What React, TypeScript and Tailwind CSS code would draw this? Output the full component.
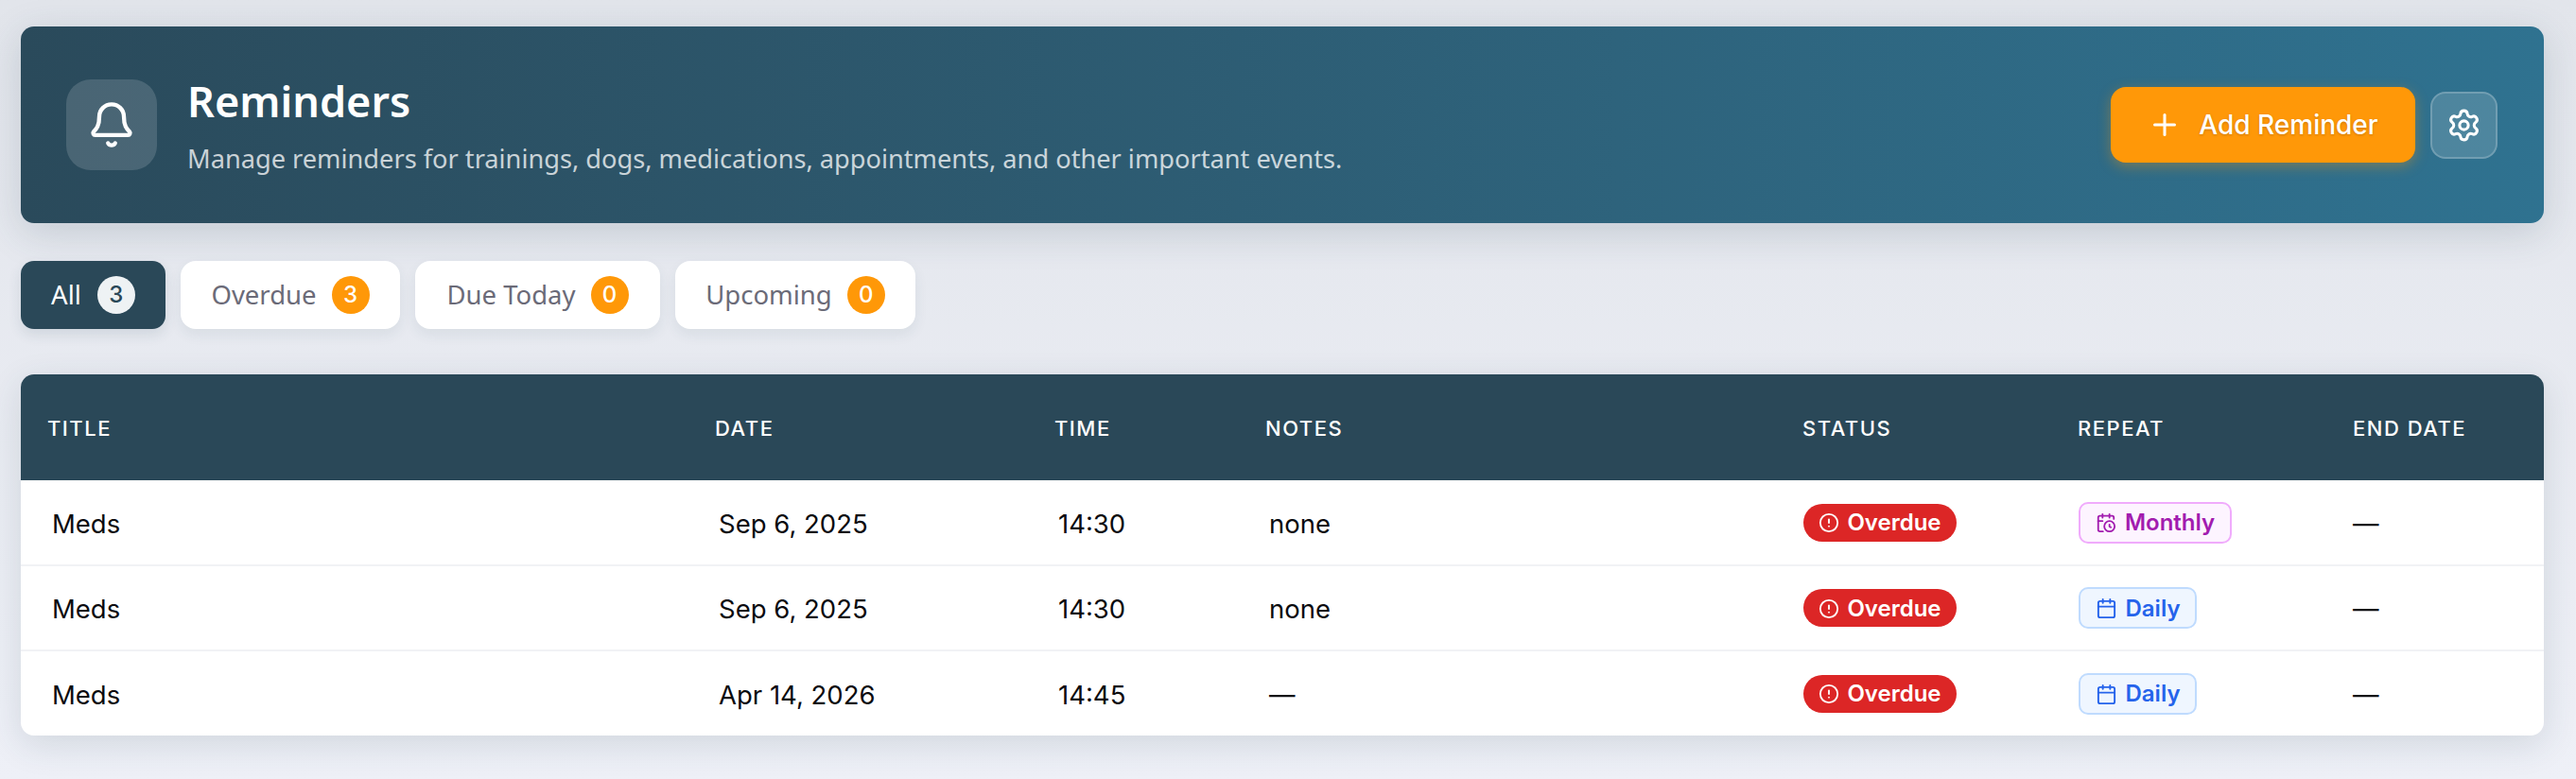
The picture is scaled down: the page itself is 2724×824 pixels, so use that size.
import React from 'react';
import { Bell, Plus, Settings, CircleAlert, Calendar, CalendarClock } from 'lucide-react';

const tabs = [
  { label: 'Overdue', count: 3, w: 'w-[232px]' },
  { label: 'Due Today', count: 0, w: 'w-[259px]' },
  { label: 'Upcoming', count: 0, w: 'w-[254px]' },
];

const rows = [
  { title: 'Meds', date: 'Sep 6, 2025', time: '14:30', notes: 'none', repeat: 'Monthly' },
  { title: 'Meds', date: 'Sep 6, 2025', time: '14:30', notes: 'none', repeat: 'Daily' },
  { title: 'Meds', date: 'Apr 14, 2026', time: '14:45', notes: '—', repeat: 'Daily' },
];

const headCell = 'pl-[28px] pt-[2px] text-left text-[22px] font-medium tracking-[1.5px] uppercase text-white';
const bodyCell = 'pl-[32px] pt-[4px] text-[27.5px] text-[#0b0b0f]';

const RepeatBadge: React.FC<{ kind: string }> = ({ kind }) => {
  if (kind === 'Monthly') {
    return (
      <span className="inline-flex h-[44px] w-[162px] items-center justify-center gap-[9px] rounded-[10px] border-2 border-[#f0abfc] bg-[#fdf4ff] pt-[1px] text-[24px] font-semibold text-[#a21caf]">
        <CalendarClock className="size-[22px]" strokeWidth={2} />
        Monthly
      </span>
    );
  }
  return (
    <span className="inline-flex h-[44px] w-[125px] items-center justify-center gap-[9px] rounded-[10px] border-2 border-[#bfdbfe] bg-[#eff6ff] pt-[1px] text-[24px] font-semibold text-[#2563eb]">
      <Calendar className="size-[23px]" strokeWidth={2} />
      Daily
    </span>
  );
};

export default function App() {
  return (
    <div className="min-h-screen bg-gradient-to-b from-[#e2e5eb] to-[#eef0f7] px-[22px] pt-[28px] pr-[34px] font-['Inter',sans-serif]">
      <header className="flex h-[208px] items-center justify-between rounded-[14px] bg-gradient-to-r from-[#2a4a5b] to-[#2f7290] pl-[48px] pr-[49px] shadow-[0_10px_40px_rgba(42,72,88,0.18)]">
        <div className="flex items-center gap-[32px]">
          <div className="flex size-[96px] items-center justify-center rounded-[26px] bg-white/15">
            <Bell className="size-[52px] text-white" strokeWidth={2} />
          </div>
          <div className="font-['Noto_Sans',sans-serif]">
            <h1 className="text-[45px] leading-[56px] font-semibold text-white">Reminders</h1>
            <p className="mt-[15px] text-[27.2px] leading-[36px] text-white/75">
              Manage reminders for trainings, dogs, medications, appointments, and other important events.
            </p>
          </div>
        </div>
        <div className="flex items-center gap-[16px]">
          <button className="flex h-[80px] w-[322px] items-center justify-center gap-[18px] rounded-[16px] bg-[#ff9808] text-[28px] font-medium text-white shadow-[0_4px_14px_rgba(255,152,8,0.35)] [text-shadow:0_1px_3px_rgba(0,0,0,0.2)]">
            <Plus className="size-[36px]" strokeWidth={2} />
            Add Reminder
          </button>
          <button className="flex size-[71px] items-center justify-center rounded-[16px] border-2 border-white/20 bg-white/15 text-white">
            <Settings className="size-[37px]" strokeWidth={2} />
          </button>
        </div>
      </header>

      <nav className="mt-[40px] flex gap-[16px] font-['Noto_Sans',sans-serif] text-[27.5px]">
        <div className="flex h-[72px] w-[153px] items-center justify-center gap-[17px] rounded-[14px] bg-[#2a4858] text-white shadow-[0_6px_14px_rgba(42,72,88,0.12)]">
          All
          <span className="flex size-[40px] items-center justify-center rounded-full bg-[#eef2f4] font-['Inter',sans-serif] text-[24px] font-medium text-[#2a4858]">3</span>
        </div>
        {tabs.map((tab) => (
          <div
            key={tab.label}
            className={`flex h-[72px] items-center justify-center gap-[16px] rounded-[16px] bg-white text-[#6b6b78] shadow-[0_6px_14px_rgba(42,72,88,0.08)] ${tab.w}`}
          >
            {tab.label}
            <span className="flex size-[40px] items-center justify-center rounded-full bg-[#ff9808] font-['Inter',sans-serif] text-[24px] font-medium text-white">{tab.count}</span>
          </div>
        ))}
      </nav>

      <div className="mt-[48px] overflow-hidden rounded-[14px] bg-white shadow-[0_10px_36px_rgba(42,72,88,0.14)]">
        <table className="w-full table-fixed border-collapse">
          <thead>
            <tr className="h-[112px] bg-[#2a4858]">
              <th className={`${headCell} w-[706px]`}>Title</th>
              <th className={`${headCell} w-[359px]`}>Date</th>
              <th className={`${headCell} w-[223px]`}>Time</th>
              <th className={`${headCell} w-[568px]`}>Notes</th>
              <th className={`${headCell} w-[291px]`}>Status</th>
              <th className={`${headCell} w-[291px]`}>Repeat</th>
              <th className={headCell}>End Date</th>
            </tr>
          </thead>
          <tbody>
            {rows.map((row, i) => (
              <tr key={i} className="h-[90px] border-b-2 border-[#f1f2f5] last:border-b-0">
                <td className={`${bodyCell} pl-[33px]`}>{row.title}</td>
                <td className={bodyCell}>{row.date}</td>
                <td className={bodyCell}>{row.time}</td>
                <td className={bodyCell}>{row.notes}</td>
                <td className="pl-[29px]">
                  <span className="inline-flex h-[40px] w-[162px] items-center justify-center gap-[8px] rounded-full bg-[#dc2626] pt-[1px] text-[24px] font-semibold text-white">
                    <CircleAlert className="size-[22px]" strokeWidth={2} />
                    Overdue
                  </span>
                </td>
                <td className="pl-[29px]">
                  <RepeatBadge kind={row.repeat} />
                </td>
                <td className="pl-[28px] pt-[4px] text-[27.5px] text-[#0b0b0f]">—</td>
              </tr>
            ))}
          </tbody>
        </table>
      </div>
    </div>
  );
}
